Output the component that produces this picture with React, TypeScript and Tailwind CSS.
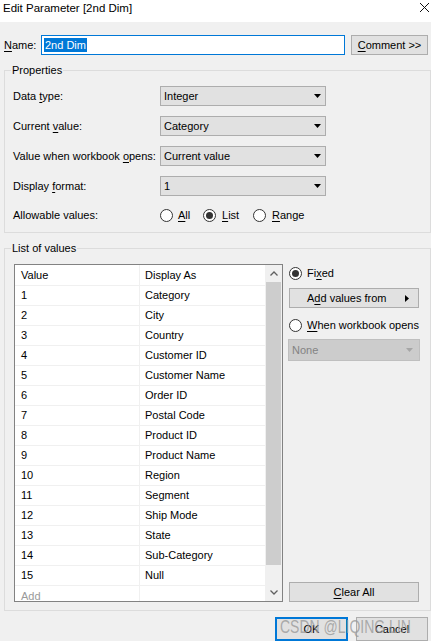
import type { ReactNode } from "react";

const rows: [string, string][] = [
  ["1", "Category"],
  ["2", "City"],
  ["3", "Country"],
  ["4", "Customer ID"],
  ["5", "Customer Name"],
  ["6", "Order ID"],
  ["7", "Postal Code"],
  ["8", "Product ID"],
  ["9", "Product Name"],
  ["10", "Region"],
  ["11", "Segment"],
  ["12", "Ship Mode"],
  ["13", "State"],
  ["14", "Sub-Category"],
  ["15", "Null"],
];

// mnemonic letter, underlined like a Windows dialog
function U({ children }: { children: ReactNode }) {
  return <span className="underline underline-offset-[2px]">{children}</span>;
}

function Radio({ checked }: { checked?: boolean }) {
  return (
    <span className="flex h-[13px] w-[13px] shrink-0 items-center justify-center rounded-full border border-[#333333] bg-white">
      {checked && <span className="h-[7px] w-[7px] rounded-full bg-[#333333]" />}
    </span>
  );
}

function Caret({ color = "#000000" }: { color?: string }) {
  return (
    <svg width="7" height="4" viewBox="0 0 7 4">
      <polygon points="0,0 7,0 3.5,4" fill={color} />
    </svg>
  );
}

function Select({ value }: { value: string }) {
  return (
    <div className="flex h-[20px] w-[166px] items-center justify-between border border-[#adadad] bg-[#e1e1e1] pl-[3px] pr-[4px]">
      <span>{value}</span>
      <Caret />
    </div>
  );
}

function PropRow({ label, children }: { label: ReactNode; children: ReactNode }) {
  return (
    <div className="flex h-[20px] items-center">
      <span className="w-[147px] shrink-0">{label}</span>
      {children}
    </div>
  );
}

function Chevron({ up }: { up?: boolean }) {
  return (
    <svg width="8" height="5" viewBox="0 0 8 5">
      <polyline
        points={up ? "0.5,4.5 4,1 7.5,4.5" : "0.5,0.5 4,4 7.5,0.5"}
        fill="none"
        stroke="#606060"
        strokeWidth="1.3"
      />
    </svg>
  );
}

export default function App() {
  return (
    <div className="relative h-[641px] w-[431px] overflow-hidden bg-[#f0f0f0] font-['Liberation_Sans',Arial,sans-serif] text-[11px] leading-[13px] text-black">
      {/* Title bar */}
      <div className="flex h-[22px] items-start justify-between bg-white pl-[3px] pr-[2px] pt-[2px] text-[11.5px]">
        <span>Edit Parameter [2nd Dim]</span>
        <svg width="9" height="9" viewBox="0 0 9 9" className="mt-[1px]">
          <path d="M0 0 L9 9 M9 0 L0 9" stroke="#111111" strokeWidth="1" />
        </svg>
      </div>

      {/* Name row */}
      <div className="mt-[13px] flex h-[20px] items-center">
        <span className="w-[41px] shrink-0 pl-[4px]">
          <U>N</U>ame:
        </span>
        <div className="flex h-[20px] w-[304px] items-center border border-[#0078d7] bg-white pl-[2px]">
          <span className="h-[14px] bg-[#0078d7] px-[1px] leading-[14px] text-white">2nd Dim</span>
        </div>
        <button className="ml-[6px] flex h-[20px] w-[77px] items-center justify-center border border-[#adadad] bg-[#e1e1e1]">
          <U>C</U>omment &gt;&gt;
        </button>
      </div>

      {/* Properties */}
      <div className="relative ml-[4px] mt-[15px] w-[427px] border border-[#dcdcdc]">
        <span className="absolute left-[6px] top-[-7px] bg-[#f0f0f0] px-[1px]">Properties</span>
        <div className="flex flex-col gap-[10px] pb-[8px] pl-[8px] pt-[15px]">
          <PropRow
            label={
              <>
                Data <U>t</U>ype:
              </>
            }
          >
            <Select value="Integer" />
          </PropRow>
          <PropRow
            label={
              <>
                Current <U>v</U>alue:
              </>
            }
          >
            <Select value="Category" />
          </PropRow>
          <PropRow
            label={
              <>
                Value when workbook <U>o</U>pens:
              </>
            }
          >
            <Select value="Current value" />
          </PropRow>
          <PropRow
            label={
              <>
                Display <U>f</U>ormat:
              </>
            }
          >
            <Select value="1" />
          </PropRow>
          <div className="flex h-[18px] items-center">
            <span className="w-[147px] shrink-0">Allowable values:</span>
            <div className="flex w-[43px] items-center gap-[5px]">
              <Radio />
              <span>
                <U>A</U>ll
              </span>
            </div>
            <div className="flex w-[50px] items-center gap-[6px]">
              <Radio checked />
              <span>
                <U>L</U>ist
              </span>
            </div>
            <div className="flex items-center gap-[6px]">
              <Radio />
              <span>
                <U>R</U>ange
              </span>
            </div>
          </div>
        </div>
      </div>

      {/* List of values */}
      <div className="relative ml-[4px] mt-[15px] w-[427px] border border-[#dcdcdc]">
        <span className="absolute left-[6px] top-[-7px] bg-[#f0f0f0] px-[1px]">List of values</span>
        <div className="flex pb-[8px] pl-[9px] pt-[15px]">
          {/* table */}
          <div className="flex h-[338px] w-[269px] border border-[#828282] bg-white">
            <div className="flex flex-1 flex-col overflow-hidden">
              <div className="flex h-[21px] shrink-0 border-b border-[#f0f0f0]">
                <span className="flex w-[125px] items-center border-r border-[#f0f0f0] pl-[6px]">Value</span>
                <span className="flex flex-1 items-center pl-[5px]">Display As</span>
              </div>
              {rows.map(([v, d]) => (
                <div key={v} className="flex h-[20px] shrink-0 border-b border-[#f0f0f0]">
                  <span className="flex w-[125px] items-center border-r border-[#f0f0f0] pl-[6px]">{v}</span>
                  <span className="flex flex-1 items-center pl-[5px]">{d}</span>
                </div>
              ))}
              <div className="flex h-[20px] shrink-0">
                <span className="flex w-[125px] items-center border-r border-[#f0f0f0] pl-[6px] text-[#9a9a9a]">Add</span>
                <span className="flex-1" />
              </div>
            </div>
            {/* scrollbar */}
            <div className="flex w-[17px] shrink-0 flex-col bg-[#f0f0f0]">
              <div className="flex h-[17px] items-center justify-center">
                <Chevron up />
              </div>
              <div className="mx-[1px] h-[283px] bg-[#cdcdcd]" />
              <div className="flex-1" />
              <div className="flex h-[17px] items-center justify-center">
                <Chevron />
              </div>
            </div>
          </div>

          {/* right panel */}
          <div className="ml-[6px] flex w-[131px] flex-col">
            <div className="mt-[2px] flex h-[15px] items-center gap-[5px]">
              <Radio checked />
              <span>
                Fi<U>x</U>ed
              </span>
            </div>
            <button className="relative mt-[7px] flex h-[20px] w-[130px] items-center border border-[#adadad] bg-[#e1e1e1] pl-[17px]">
              <span>
                A<U>d</U>d values from
              </span>
              <svg width="4" height="7" viewBox="0 0 4 7" className="ml-auto mr-[9px]">
                <polygon points="0,0 4,3.5 0,7" fill="#000000" />
              </svg>
            </button>
            <div className="mt-[10px] flex h-[15px] items-center gap-[5px]">
              <Radio />
              <span>
                <U>W</U>hen workbook opens
              </span>
            </div>
            <div className="-ml-[1px] mt-[6px] flex h-[22px] w-[132px] items-center justify-between border border-[#bfbfbf] bg-[#cccccc] pl-[3px] pr-[6px] text-[#838383]">
              <span>None</span>
              <Caret color="#a6a6a6" />
            </div>
            <button className="mt-auto flex h-[20px] w-[130px] items-center justify-center border border-[#adadad] bg-[#e1e1e1]">
              <span>
                <U>C</U>lear All
              </span>
            </button>
          </div>
        </div>
      </div>

      {/* Dialog buttons */}
      <div className="relative mt-[6px] flex justify-end gap-[8px] pr-[3px]">
        <button className="flex h-[24px] w-[73px] items-center justify-center border-2 border-[#0078d7] bg-[#e1e1e1]">
          OK
        </button>
        <button className="flex h-[24px] w-[72px] items-center justify-center border border-[#adadad] bg-[#e1e1e1]">
          Cancel
        </button>
        <span className="pointer-events-none absolute left-[280px] top-[0px] origin-top scale-y-[1.3] text-[14px] leading-[14px] text-[#9a9a9a]/80">
          CSDN @LIQING LIN
        </span>
      </div>
    </div>
  );
}
